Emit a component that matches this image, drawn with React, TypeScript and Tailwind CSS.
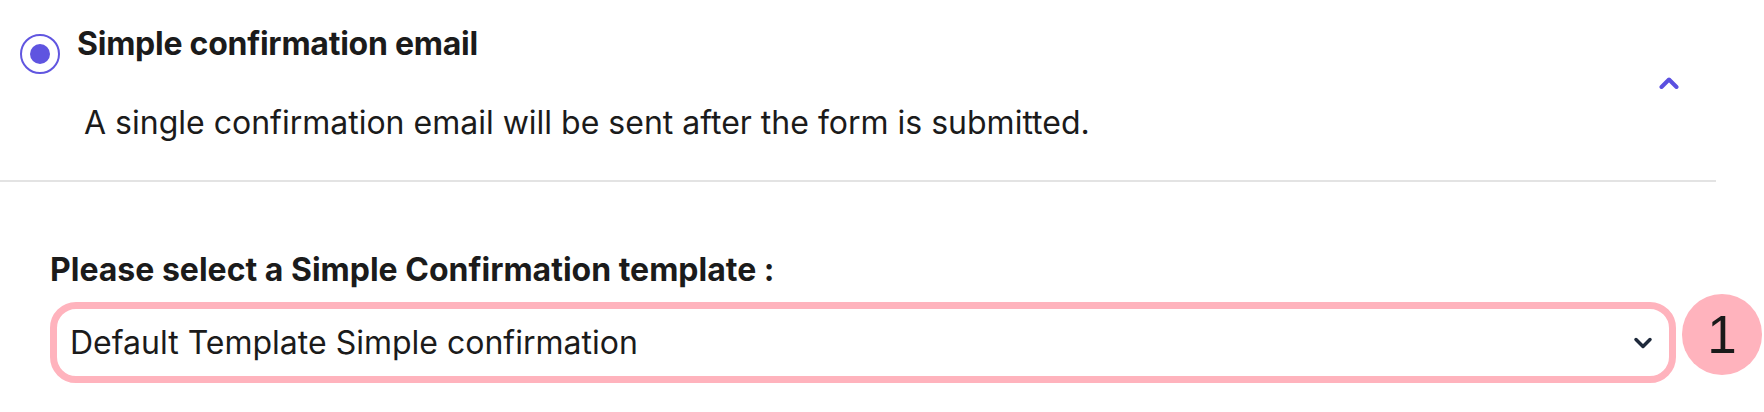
export default function App() {
  return (
    <div className="w-[1764px] h-[412px] overflow-hidden bg-white text-[#1b1b1b] font-['Inter',_'Noto_Sans',_sans-serif]">
      {/* option header */}
      <div className="flex w-[1716px] h-[182px] border-b-2 border-[#e3e3e3] pl-[20px] pr-[37px] pt-[25px]">
        <div className="flex flex-1 flex-col">
          <div className="flex items-start">
            <span className="mt-[9px] flex h-[40px] w-[40px] items-center justify-center rounded-full border-2 border-[#6156e0]">
              <span className="h-[20px] w-[20px] rounded-full bg-[#5f54e0]" />
            </span>
            <span className="ml-[17px] text-[32px] leading-[38px] font-bold tracking-[-0.25px]">Simple confirmation email</span>
          </div>
          <p className="mt-[30px] pl-[64px] text-[32px] leading-[38px]">
            A single confirmation email will be sent after the form is submitted.
          </p>
        </div>
        <svg className="mt-[52px]" width="20" height="12" viewBox="0 0 20 12" fill="none">
          <path d="M2.5 10L10 2.5L17.5 10" stroke="#5b50e0" strokeWidth="4" strokeLinecap="round" strokeLinejoin="round" />
        </svg>
      </div>

      {/* template select */}
      <div className="pl-[50px]">
        <label className="mt-[69px] block text-[32px] leading-[38px] font-bold">
          Please select a Simple Confirmation template :
        </label>
        <div className="mt-[4px] flex items-start">
          <div className="mt-[9px] flex h-[81px] w-[1626px] items-center justify-between rounded-[26px] border-[7px] border-[#ffb3bd] bg-white pl-[13px] pr-[16px]">
            <span className="text-[32px] leading-[38px]">Default Template Simple confirmation</span>
            <svg width="20" height="12" viewBox="0 0 20 12" fill="none">
              <path d="M3 2.5L10 9.5L17 2.5" stroke="#1e293b" strokeWidth="3.5" strokeLinecap="round" strokeLinejoin="round" />
            </svg>
          </div>
          <div className="ml-[6px] mt-[1px] flex h-[81px] w-[80px] shrink-0 items-center justify-center rounded-full bg-[#ffb3bd]">
            <span className="text-[53px] leading-none text-[#1a1a1a] font-['Liberation_Sans',_Arial,_sans-serif]">1</span>
          </div>
        </div>
      </div>
    </div>
  );
}
